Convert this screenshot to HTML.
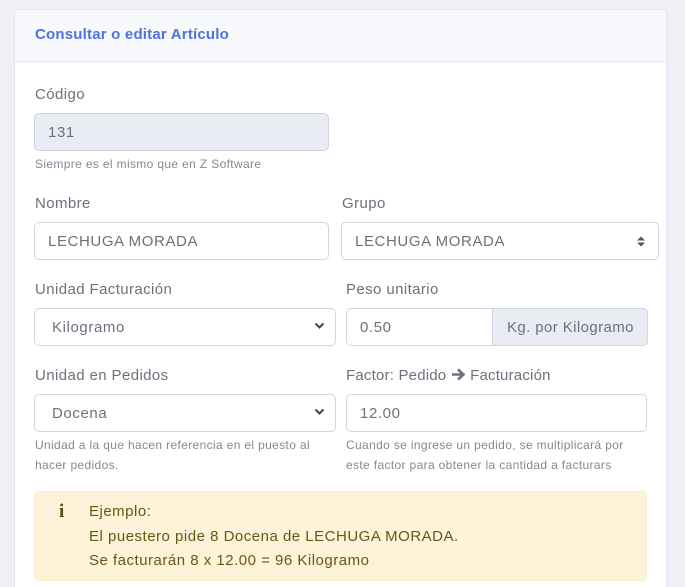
<!DOCTYPE html>
<html><head><meta charset="utf-8"><style>
*{box-sizing:border-box;margin:0;padding:0}
html,body{width:685px;height:587px;overflow:hidden}
body{background:#eff0f5;font-family:"Liberation Sans",sans-serif;position:relative}
.card{position:absolute;left:14px;top:9px;width:653px;height:590px;background:#fff;border:1px solid #e3e6f0;border-radius:5px}
.hdr{position:absolute;left:0;top:0;right:0;height:52px;background:#f8f9fc;border-bottom:1px solid #e3e6f0;border-radius:5px 5px 0 0}
.hdr span{position:absolute;left:20px;top:16px;font-size:15px;font-weight:bold;color:#4e73df;letter-spacing:0.2px}
.a{position:absolute}
.lbl{font-size:15px;color:#6e707e;letter-spacing:0.4px}
.help{font-size:12px;color:#858796;line-height:20px;letter-spacing:0.35px}
.in{border:1px solid #d1d3e2;border-radius:5px;height:38px;font-size:15px;color:#6e707e;padding:10px 0 0 13px;background:#fff;letter-spacing:0.6px}
.sel{padding-left:17px}
.chev{position:absolute;right:10px;top:13px}
.alert{position:absolute;left:34px;top:491px;width:613px;height:90px;background:#fdf3d8;border:1px solid #fcecc4;border-radius:5px;color:#6b5516;font-size:15px}
</style></head><body>
<div class="card"><div class="hdr"><span>Consultar o editar Artículo</span></div></div>

<div class="a lbl" style="left:35px;top:86px">Código</div>
<div class="a in" style="left:34px;top:113px;width:295px;background:#eaecf4">131</div>
<div class="a help" style="left:35px;top:154px">Siempre es el mismo que en Z Software</div>

<div class="a lbl" style="left:35px;top:195px">Nombre</div>
<div class="a in" style="left:34px;top:222px;width:295px">LECHUGA MORADA</div>
<div class="a lbl" style="left:342px;top:195px">Grupo</div>
<div class="a in" style="left:341px;top:222px;width:318px">LECHUGA MORADA
<svg class="chev" style="top:13px;right:13px" width="8" height="11" viewBox="0 0 8 11"><path d="M0 4.5L4 0.5 8 4.5ZM0 6.5L4 10.5 8 6.5Z" fill="#555"/></svg></div>

<div class="a lbl" style="left:35px;top:281px">Unidad Facturación</div>
<div class="a in sel" style="left:34px;top:308px;width:302px">Kilogramo
<svg class="chev" width="11" height="8" viewBox="0 0 11 8"><path d="M1.5 1.5L5.5 5.5 9.5 1.5" stroke="#444" stroke-width="2" fill="none"/></svg></div>
<div class="a lbl" style="left:346px;top:281px">Peso unitario</div>
<div class="a in" style="left:346px;top:308px;width:147px;border-radius:5px 0 0 5px">0.50</div>
<div class="a in" style="left:492px;top:308px;width:156px;background:#eaecf4;border-radius:0 5px 5px 0;padding-left:14px;letter-spacing:0.4px">Kg. por Kilogramo</div>

<div class="a lbl" style="left:35px;top:367px">Unidad en Pedidos</div>
<div class="a in sel" style="left:34px;top:394px;width:302px">Docena
<svg class="chev" width="11" height="8" viewBox="0 0 11 8"><path d="M1.5 1.5L5.5 5.5 9.5 1.5" stroke="#444" stroke-width="2" fill="none"/></svg></div>
<div class="a help" style="left:35px;top:435px;width:290px">Unidad a la que hacen referencia en el puesto al hacer pedidos.</div>
<div class="a lbl" style="left:346px;top:367px;letter-spacing:0.2px">Factor: Pedido <svg width="15" height="13" viewBox="0 0 15 13" style="vertical-align:-1px"><path d="M1 6.5H12M7 1.5L12.5 6.5 7 11.5" stroke="#6e707e" stroke-width="2.6" fill="none"/></svg> Facturación</div>
<div class="a in" style="left:346px;top:394px;width:301px">12.00</div>
<div class="a help" style="left:346px;top:435px;width:285px">Cuando se ingrese un pedido, se multiplicará por este factor para obtener la cantidad a facturars</div>

<div class="alert">
<div class="a" style="left:24px;top:9px;font-family:'Liberation Serif',serif;font-weight:bold;font-size:19px;color:#5c4a12">i</div>
<div class="a" style="left:54px;top:8px;line-height:24.5px;letter-spacing:0.5px;white-space:nowrap">Ejemplo:<br>El puestero pide 8 Docena de LECHUGA MORADA.<br>Se facturarán 8 x 12.00 = 96 Kilogramo</div>
</div>
</body></html>
